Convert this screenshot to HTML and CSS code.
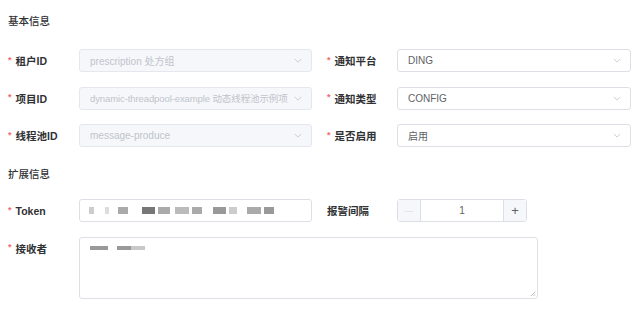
FILE: index.html
```html
<!DOCTYPE html>
<html>
<head>
<meta charset="utf-8">
<link rel="stylesheet" href="styles.css">
</head>
<body>
<div class="form">
  <div class="section">基本信息</div>
  <div class="row">
    <div class="item">
      <label class="lbl"><span class="req">*</span>租户ID</label>
      <div class="sel disabled"><span class="val">prescription 处方组</span><svg class="arr" viewBox="0 0 10 6"><path d="M1 1l4 4 4-4" fill="none" stroke="#c0c4cc" stroke-width="1"/></svg></div>
    </div>
    <div class="item right">
      <label class="lbl"><span class="req">*</span>通知平台</label>
      <div class="sel"><span class="val">DING</span><svg class="arr" viewBox="0 0 10 6"><path d="M1 1l4 4 4-4" fill="none" stroke="#c0c4cc" stroke-width="1"/></svg></div>
    </div>
  </div>
  <div class="row">
    <div class="item">
      <label class="lbl"><span class="req">*</span>项目ID</label>
      <div class="sel disabled"><span class="val long">dynamic-threadpool-example 动态线程池示例项</span><svg class="arr" viewBox="0 0 10 6"><path d="M1 1l4 4 4-4" fill="none" stroke="#c0c4cc" stroke-width="1"/></svg></div>
    </div>
    <div class="item right">
      <label class="lbl"><span class="req">*</span>通知类型</label>
      <div class="sel"><span class="val">CONFIG</span><svg class="arr" viewBox="0 0 10 6"><path d="M1 1l4 4 4-4" fill="none" stroke="#c0c4cc" stroke-width="1"/></svg></div>
    </div>
  </div>
  <div class="row">
    <div class="item">
      <label class="lbl"><span class="req">*</span>线程池ID</label>
      <div class="sel disabled"><span class="val">message-produce</span><svg class="arr" viewBox="0 0 10 6"><path d="M1 1l4 4 4-4" fill="none" stroke="#c0c4cc" stroke-width="1"/></svg></div>
    </div>
    <div class="item right">
      <label class="lbl"><span class="req">*</span>是否启用</label>
      <div class="sel"><span class="val">启用</span><svg class="arr" viewBox="0 0 10 6"><path d="M1 1l4 4 4-4" fill="none" stroke="#c0c4cc" stroke-width="1"/></svg></div>
    </div>
  </div>
  <div class="section sec2">扩展信息</div>
  <div class="row">
    <div class="item">
      <label class="lbl"><span class="req">*</span>Token</label>
      <div class="sel token">
        <span class="blur b1"></span><span class="blur b2"></span><span class="blur b3"></span>
        <span class="blur b4"></span><span class="blur b5"></span><span class="blur b6"></span>
        <span class="blur b7"></span><span class="blur b8"></span><span class="blur b9"></span>
        <span class="blur b10"></span><span class="blur b11"></span>
      </div>
    </div>
    <div class="item right">
      <label class="lbl plain">报警间隔</label>
      <div class="num">
        <span class="btn minus">—</span>
        <span class="numval">1</span>
        <span class="btn plus">+</span>
      </div>
    </div>
  </div>
  <div class="row tall">
    <div class="item wide">
      <label class="lbl"><span class="req">*</span>接收者</label>
      <div class="area">
        <span class="blur t1"></span><span class="blur t2"></span>
        <svg class="grip" viewBox="0 0 8 8"><path d="M7 2L2 7M7 5L5 7" stroke="#999" stroke-width="0.8"/></svg>
      </div>
    </div>
  </div>
</div>
</body>
</html>
```
FILE: styles.css
```css
* { box-sizing: border-box; }
body {
  margin: 0;
  background: #fff;
  font-family: "Noto Sans CJK SC", "Liberation Sans", sans-serif;
  color: #606266;
}
.form {
  padding: 13px 0 0 8px;
  width: 640px;
}
.section {
  font-size: 10.5px;
  color: #303133;
  font-weight: 500;
  height: 16px;
  line-height: 16px;
  margin-bottom: 20px;
}
.sec2 {
  margin-top: 19px;
  margin-bottom: 17px;
}
.row {
  display: flex;
  margin-bottom: 14.5px;
  height: 23px;
}
.row.tall {
  height: 62px;
  margin-bottom: 0;
}
.item {
  display: flex;
  align-items: center;
  width: 319px;
}
.item.right {
  width: 304px;
}
.lbl {
  width: 71px;
  font-size: 10.5px;
  color: #303133;
  font-weight: 600;
  font-family: "Liberation Sans", "Noto Sans CJK SC", sans-serif;
  display: flex;
  align-items: center;
}
.item.right .lbl { width: 70px; }
.lbl.plain { font-weight: 600; }
.req {
  color: #f56c6c;
  font-size: 9px;
  margin-right: 4px;
  position: relative;
  top: -1px;
}
.sel {
  width: 233px;
  height: 23px;
  border: 1px solid #dcdfe6;
  border-radius: 3px;
  background: #fff;
  display: flex;
  align-items: center;
  padding: 0 10px;
  position: relative;
  font-size: 10px;
  color: #606266;
  font-family: "Liberation Sans", "Noto Sans CJK SC", sans-serif;
}
.item.right .sel { width: 234px; }
.sel.disabled {
  background: #f5f7fa;
  border-color: #e4e7ed;
  color: #c0c4cc;
}
.val {
  flex: 1;
  white-space: nowrap;
  overflow: hidden;
}
.val.long {
  font-size: 9.5px;
  letter-spacing: -0.1px;
}
.arr {
  width: 8px;
  height: 5px;
  flex: none;
  margin-left: 2px;
  margin-right: -1px;
}
.token { gap: 0; padding-left: 9px; }
.blur {
  display: inline-block;
  background: #b8b8b8;
  height: 7px;
}
.b1 { width: 5px; margin-right: 11px; background: #ccc; }
.b2 { width: 4px; margin-right: 9px; background: #ddd; }
.b3 { width: 10px; margin-right: 14px; background: #aaa; }
.b4 { width: 13px; margin-right: 3px; background: #777; }
.b5 { width: 12px; margin-right: 5px; background: #aaa; }
.b6 { width: 14px; margin-right: 3px; background: #bbb; }
.b7 { width: 10px; margin-right: 11px; background: #aaa; }
.b8 { width: 13px; margin-right: 3px; background: #999; }
.b9 { width: 8px; margin-right: 10px; background: #ccc; }
.b10 { width: 14px; margin-right: 3px; background: #aaa; }
.b11 { width: 10px; background: #999; }
.num {
  width: 130px;
  height: 23px;
  border: 1px solid #dcdfe6;
  border-radius: 3px;
  display: flex;
  font-family: "Liberation Sans", sans-serif;
}
.btn {
  width: 23px;
  background: #f5f7fa;
  color: #c0c4cc;
  display: flex;
  align-items: center;
  justify-content: center;
  font-size: 10px;
}
.minus { border-right: 1px solid #dcdfe6; color: #d8dbe0; font-size: 9px; }
.plus { border-left: 1px solid #dcdfe6; color: #606266; font-size: 13px; }
.numval {
  flex: 1;
  display: flex;
  align-items: center;
  justify-content: center;
  font-size: 10px;
  color: #606266;
}
.item.wide {
  width: 540px;
  align-items: flex-start;
}
.item.wide .lbl { height: 23px; }
.area {
  width: 459px;
  height: 62px;
  border: 1px solid #dcdfe6;
  border-radius: 3px;
  position: relative;
  padding: 7px 0 0 10px;
  display: flex;
  align-items: flex-start;
}
.t1 { width: 18px; height: 4px; margin-top: 1px; margin-right: 9px; background: #999; }
.t2 { width: 28px; height: 4px; margin-top: 1px; background: linear-gradient(to right, #999 50%, #c8c8c8 50%); }
.grip {
  position: absolute;
  right: 1px;
  bottom: 1px;
  width: 7px;
  height: 7px;
}
```
